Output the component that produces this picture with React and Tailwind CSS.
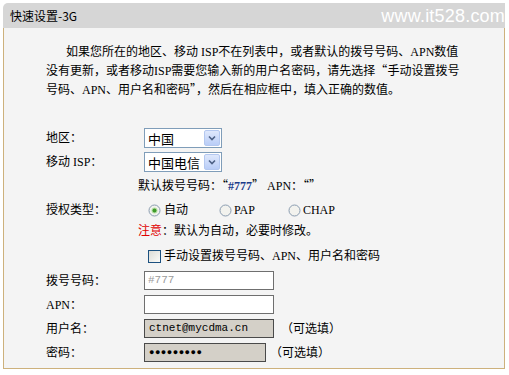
import React from 'react';

const FONT = { fontFamily: '"Liberation Serif", "Noto Sans CJK SC", serif' };
const CJK = { fontFamily: '"Noto Sans CJK SC", sans-serif', fontFeatureSettings: '"fwid"' };

// full-width quote marks, like the original Song font
function Q({ c }) {
  return <span style={CJK}>{c}</span>;
}

function Select({ value, width }) {
  return (
    <div
      className="flex items-center justify-between h-[20px] bg-white border border-[#7f9db9] pl-[3px] pr-[1px]"
      style={{ width }}
    >
      <span className="text-[13px] leading-none text-black" style={{ fontFamily: '"Noto Sans CJK SC", sans-serif' }}>
        {value}
      </span>
      <span className="flex items-center justify-center w-[16px] h-[16px] rounded-[2px] border border-[#b4c8f0] bg-gradient-to-b from-[#dfe8fc] to-[#b9cdf7]">
        <svg width="8" height="6" viewBox="0 0 8 6">
          <path d="M1 1.5 L4 4.5 L7 1.5" fill="none" stroke="#4d6185" strokeWidth="1.6" />
        </svg>
      </span>
    </div>
  );
}

function Radio({ checked }) {
  return (
    <svg width="13" height="13" viewBox="0 0 13 13" className="shrink-0">
      <circle cx="6.5" cy="6.5" r="5.5" fill="#f2f2ee" stroke="#8a9cb0" strokeWidth="1" />
      {checked && <circle cx="6.5" cy="6.5" r="3" fill="#b7e0a6" />}
      {checked && <circle cx="6.5" cy="6.5" r="2" fill="#3f9a2a" />}
    </svg>
  );
}

function Row({ label, h = 19, children, className = '' }) {
  return (
    <div className={`flex items-center ${className}`} style={{ height: h }}>
      <div className="w-[92px] shrink-0 text-[12px] text-black">{label}</div>
      <div className="flex items-center">{children}</div>
    </div>
  );
}

export default function App() {
  return (
    <div className="w-[509px] h-[375px] bg-white overflow-hidden pt-[3px] pl-[3px]" style={FONT} lang="zh-CN">
      <div className="w-[502px]">
        {/* title bar */}
        <div className="h-[25px] bg-[#d6d6d6] rounded-tl-[5px] flex items-center justify-between pl-[7px]">
          <span className="text-[12px] text-black" style={{ fontFamily: '"Noto Sans CJK SC", sans-serif' }}>快速设置-3G</span>
          <span className="text-[18px] text-white tracking-[0.2px] leading-none" style={{ fontFamily: '"Liberation Sans", sans-serif' }}>
            www.it528.com
          </span>
        </div>

        {/* body */}
        <div className="h-[341px] bg-[#f4f4f4] border-l border-r border-b border-[#cdb17c] pl-[42px]">
          <div className="pt-[15px] text-[12px] leading-[18px] text-black whitespace-nowrap">
            <div className="pl-[20px]">如果您所在的地区、移动 ISP不在列表中，或者默认的拨号号码、APN数值</div>
            <div>没有更新，或者移动ISP需要您输入新的用户名密码，请先选择<Q c="“" />手动设置拨号</div>
            <div>号码、APN、用户名和密码<Q c="”" />，然后在相应框中，填入正确的数值。</div>
          </div>

          <div className="mt-[29px] flex flex-col">
            <Row label="地区：" h={20}>
              <div className="ml-[6px]"><Select value="中国" width={78} /></div>
            </Row>
            <Row label="移动 ISP：" h={20} className="mt-[4px]">
              <div className="ml-[6px]"><Select value="中国电信" width={78} /></div>
            </Row>
            <Row label="" h={18} className="mt-[4px]">
              <span className="text-[12px] text-black whitespace-nowrap">
                默认拨号号码：<Q c="“" /><b className="text-[#1a3a8a]">#777</b><Q c="”" /> APN：<Q c="“" /><Q c="”" />
              </span>
            </Row>
            <Row label="授权类型：" h={18} className="mt-[7px]">
              <div className="flex items-center text-[12px] text-black ml-[10px]">
                <Radio checked />
                <span className="ml-[3px]">自动</span>
                <span className="ml-[31px]"><Radio /></span>
                <span className="ml-[2px]">PAP</span>
                <span className="ml-[33px]"><Radio /></span>
                <span className="ml-[2px]">CHAP</span>
              </div>
            </Row>
            <Row label="" h={18} className="mt-[3px]">
              <span className="text-[12px] text-black whitespace-nowrap">
                <span className="text-[#e00000]">注意</span>：默认为自动，必要时修改。
              </span>
            </Row>
            <Row label="" h={18} className="mt-[7px]">
              <div className="flex items-center ml-[10px] text-[12px] text-black whitespace-nowrap">
                <span className="w-[13px] h-[13px] border border-[#1c5180] bg-gradient-to-br from-[#dcdcd6] to-[#fbfbf9]" />
                <span className="ml-[3px]">手动设置拨号号码、APN、用户名和密码</span>
              </div>
            </Row>
            <Row label="拨号号码：" className="mt-[6px]">
              <div className="ml-[6px] w-[130px] h-[19px] bg-white border border-[#6f6f6f] flex items-center pl-[3px] text-[11px] text-[#9a9a9a]" style={{ fontFamily: '"Liberation Mono", monospace' }}>
                #777
              </div>
            </Row>
            <Row label="APN：" className="mt-[5px]">
              <div className="ml-[6px] w-[130px] h-[19px] bg-white border border-[#6f6f6f]" />
            </Row>
            <Row label="用户名：" className="mt-[5px]">
              <div className="ml-[6px] w-[130px] h-[19px] bg-[#d4d0c8] border border-[#4a4a4a] flex items-center pl-[4px] text-[11px] text-black" style={{ fontFamily: '"Liberation Mono", monospace' }}>
                ctnet@mycdma.cn
              </div>
              <span className="ml-[7px] text-[12px] text-black whitespace-nowrap">（可选填）</span>
            </Row>
            <Row label="密码：" className="mt-[5px]">
              <div className="ml-[6px] w-[122px] h-[19px] bg-[#d4d0c8] border border-[#4a4a4a] flex items-center pl-[4px] text-[9px] tracking-[0.5px] text-black">
                ●●●●●●●●●
              </div>
              <span className="ml-[4px] text-[12px] text-black whitespace-nowrap">（可选填）</span>
            </Row>
          </div>
        </div>
      </div>
    </div>
  );
}
